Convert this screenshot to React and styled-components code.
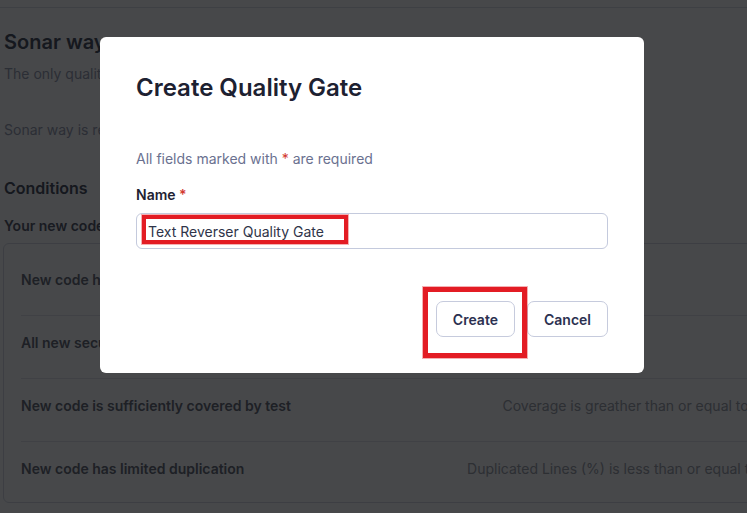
import React from 'react'
import styled, { createGlobalStyle } from 'styled-components'

const GlobalStyle = createGlobalStyle`
  html, body {
    margin: 0;
    padding: 0;
    overflow: hidden;
    background: #ffffff;
  }
  body {
    font-family: Inter, 'Noto Sans', sans-serif;
    -webkit-font-smoothing: antialiased;
  }
`

// page behind the dialog
const Page = styled.div`
  width: 1000px;
  height: 513px;
  display: flex;
  flex-direction: column;
`

const TopBar = styled.div`
  height: 7px;
  border-bottom: 1px solid #dfe2ea;
`

const Content = styled.main`
  display: flex;
  flex-direction: column;
  padding: 20px 0 0 3px;
`

const GateTitle = styled.h1`
  margin: 0 0 0 1px;
  font-size: 20px;
  line-height: 28px;
  font-weight: 600;
  color: #4e5262;
`

const Muted = styled.p`
  margin: ${(p) => p.$top}px 0 0 1px;
  font-size: 14px;
  line-height: 20px;
  color: #9ca2b4;
`

const SectionTitle = styled.h2`
  margin: 36px 0 0 1px;
  font-size: 16px;
  line-height: 24px;
  font-weight: 600;
  color: #4e5262;
`

const SubTitle = styled.h3`
  margin: 16px 0 0 1px;
  font-size: 14px;
  line-height: 20px;
  font-weight: 600;
  color: #5a5e6e;
`

const Card = styled.div`
  margin-top: 7px;
  width: 960px;
  border: 1px solid #d9dce5;
  border-radius: 6px;
  padding: 9px 17px 0;
`

const ConditionRow = styled.div`
  display: grid;
  grid-template-columns: 420px 355px 1fr;
  align-items: center;
  padding: 18px 0 ${(p) => (p.$last ? 24 : 26)}px;
  line-height: 18px;
  font-size: 14px;
  border-bottom: ${(p) => (p.$last ? 'none' : '1px solid #e4e6ec')};
`

const ConditionName = styled.span`
  font-weight: 600;
  color: #6c707c;
`

const ConditionRule = styled.span`
  text-align: right;
  white-space: nowrap;
  color: #a0a4ad;
`

// dialog
const Overlay = styled.div`
  position: fixed;
  inset: 0;
  background: rgba(0, 1, 4, 0.72);
  display: flex;
  align-items: flex-start;
  padding: 37px 0 0 100px;
`

const Dialog = styled.div`
  width: 544px;
  box-sizing: border-box;
  background: #ffffff;
  border-radius: 6px;
  padding: 36px;
  display: flex;
  flex-direction: column;
`

const DialogTitle = styled.h2`
  margin: 0;
  font-size: 24px;
  line-height: 30px;
  font-weight: 600;
  color: #1d2131;
`

const Hint = styled.p`
  margin: 46px 0 0;
  font-size: 14px;
  line-height: 20px;
  color: #6a7190;
`

const Required = styled.span`
  color: #d2392f;
`

const Label = styled.label`
  margin-top: 16px;
  font-size: 14px;
  line-height: 20px;
  font-weight: 600;
  color: #1e2232;
`

const Field = styled.div`
  position: relative;
  margin-top: 8px;
`

const TextInput = styled.input`
  display: block;
  width: 100%;
  box-sizing: border-box;
  height: 36px;
  padding: 0 11px;
  border: 1px solid #c4cadd;
  border-radius: 6px;
  font-family: Inter, 'Noto Sans', sans-serif;
  font-size: 14px;
  color: #2f3449;
  outline: none;
`

const Footer = styled.div`
  display: flex;
  justify-content: flex-end;
  gap: 12px;
  margin-top: 52px;
`

const ButtonWrap = styled.div`
  position: relative;
`

const Button = styled.button`
  height: 36px;
  padding: 0 16px;
  background: #ffffff;
  border: 1px solid #c6cbdd;
  border-radius: 7px;
  font-family: Inter, 'Noto Sans', sans-serif;
  font-size: 14px;
  font-weight: 600;
  color: #2b3050;
  cursor: pointer;
`

// red highlight boxes drawn over the screenshot
const Highlight = styled.div`
  position: absolute;
  left: ${(p) => p.$left}px;
  top: ${(p) => p.$top}px;
  width: ${(p) => p.$w}px;
  height: ${(p) => p.$h}px;
  box-sizing: border-box;
  border: ${(p) => p.$stroke}px solid #e31c24;
  box-shadow: 0 0 0 1px rgba(227, 28, 36, 0.35);
  pointer-events: none;
`

const conditions = [
  { name: 'New code has no issues', rule: '' },
  { name: 'All new security hotspots are reviewed', rule: '' },
  {
    name: 'New code is sufficiently covered by test',
    rule: 'Coverage is greather than or equal to 80.0%',
  },
  {
    name: 'New code has limited duplication',
    rule: 'Duplicated Lines (%) is less than or equal to 3.0%',
  },
]

export default function App() {
  return (
    <>
      <GlobalStyle />
      <Page>
        <TopBar />
        <Content>
          <GateTitle>Sonar way</GateTitle>
          <Muted $top={8}>The only quality gate you need</Muted>
          <Muted $top={36}>Sonar way is recommended</Muted>
          <SectionTitle>Conditions</SectionTitle>
          <SubTitle>Your new code will be clean if:</SubTitle>
          <Card>
            {conditions.map((c, i) => (
              <ConditionRow key={c.name} $last={i === conditions.length - 1}>
                <ConditionName>{c.name}</ConditionName>
                <ConditionRule>{c.rule}</ConditionRule>
              </ConditionRow>
            ))}
          </Card>
        </Content>
      </Page>

      <Overlay>
        <Dialog>
          <DialogTitle>Create Quality Gate</DialogTitle>
          <Hint>
            All fields marked with <Required>*</Required> are required
          </Hint>
          <Label htmlFor="gate-name">
            Name <Required>*</Required>
          </Label>
          <Field>
            <TextInput id="gate-name" defaultValue="Text Reverser Quality Gate" />
            <Highlight $left={6} $top={2} $w={206} $h={29} $stroke={4} />
          </Field>
          <Footer>
            <ButtonWrap>
              <Button>Create</Button>
              <Highlight $left={-13} $top={-14} $w={104} $h={71} $stroke={5} />
            </ButtonWrap>
            <Button>Cancel</Button>
          </Footer>
        </Dialog>
      </Overlay>
    </>
  )
}
